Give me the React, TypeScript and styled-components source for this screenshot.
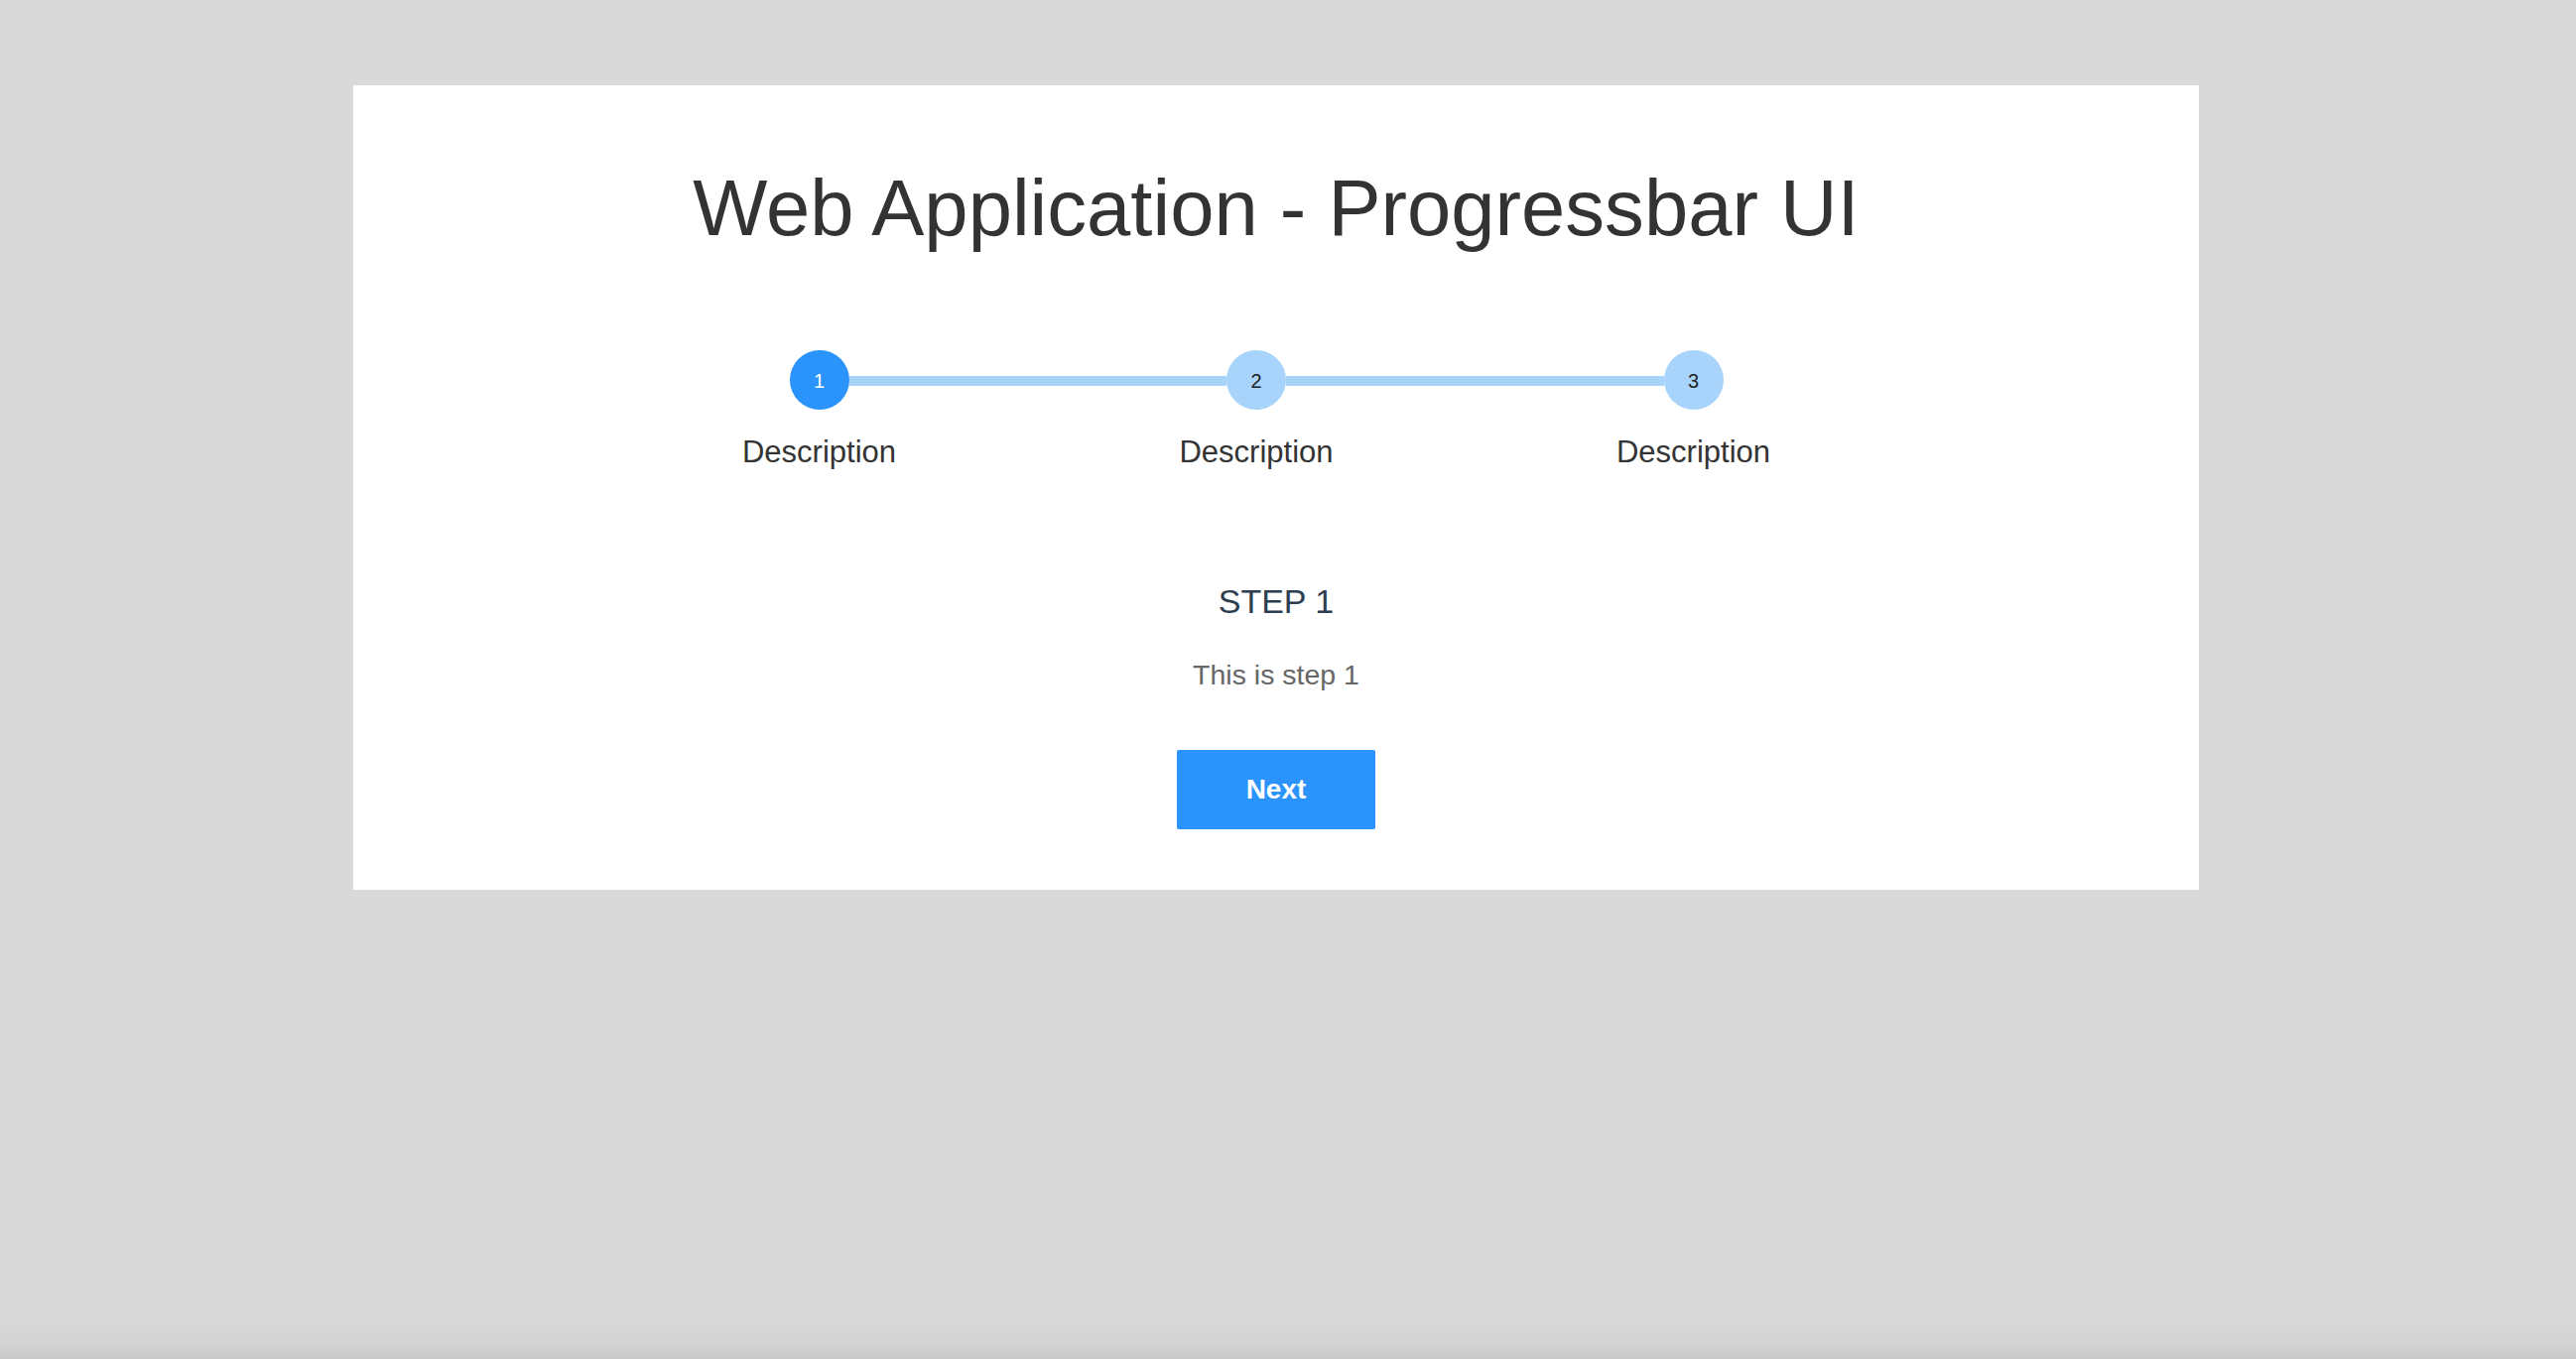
import React from "react";
import styled, { createGlobalStyle } from "styled-components";

const GlobalStyle = createGlobalStyle`
  html, body {
    margin: 0;
    padding: 0;
  }
  body {
    min-height: 100vh;
    font-family: "Liberation Sans", Arial, Helvetica, sans-serif;
    background: linear-gradient(to bottom, #d9d9d9 0, #d9d9d9 calc(100% - 44px), #d3d3d3 calc(100% - 14px), #c9c9c9 100%);
  }
`;

const Page = styled.div`
  display: flex;
  padding: 86px 380px 0 356px;
`;

const Card = styled.main`
  flex: 1;
  background: #ffffff;
  display: flex;
  flex-direction: column;
  align-items: center;
  padding: 79px 0 61px;
`;

const Title = styled.h1`
  margin: 0;
  font-size: 79.6px;
  font-weight: 400;
  line-height: 89px;
  color: #333333;
`;

const Stepper = styled.ol`
  list-style: none;
  display: flex;
  justify-content: center;
  margin: 99px 0 0;
  padding: 0 40px 0 0;
`;

const StepItem = styled.li`
  width: 440.5px;
  display: flex;
  flex-direction: column;
  align-items: center;
`;

const Rail = styled.div`
  width: 100%;
  display: flex;
  align-items: center;
`;

const HalfLine = styled.span<{ $show: boolean }>`
  flex: 1;
  height: 10px;
  margin-top: 2px;
  background: ${(p) => (p.$show ? "#a8d4fb" : "transparent")};
`;

const Dot = styled.span<{ $active: boolean }>`
  width: 60px;
  height: 60px;
  box-sizing: border-box;
  padding-top: 3px;
  border-radius: 50%;
  display: flex;
  align-items: center;
  justify-content: center;
  font-size: 20px;
  background: ${(p) => (p.$active ? "#2a93fc" : "#a8d4fb")};
  color: ${(p) => (p.$active ? "#ffffff" : "#222222")};
`;

const Label = styled.span`
  margin-top: 24px;
  font-size: 31px;
  line-height: 37px;
  color: #333333;
`;

const StepTitle = styled.h3`
  margin: 113px 0 0;
  font-size: 34px;
  font-weight: 400;
  line-height: 39px;
  color: #2c3e50;
`;

const StepText = styled.p`
  margin: 38px 0 0;
  font-size: 28.5px;
  line-height: 32px;
  color: #666666;
`;

const NextButton = styled.button`
  margin-top: 60px;
  width: 200px;
  height: 80px;
  border: none;
  border-radius: 2px;
  background: #2a93fc;
  color: #ffffff;
  font-family: "Liberation Sans", Arial, Helvetica, sans-serif;
  font-size: 28px;
  font-weight: 700;
  cursor: pointer;
`;

const steps = [1, 2, 3];

export default function App() {
  const current = 1;
  return (
    <>
      <GlobalStyle />
      <Page>
        <Card>
          <Title>Web Application - Progressbar UI</Title>
          <Stepper>
            {steps.map((n, i) => (
              <StepItem key={n}>
                <Rail>
                  <HalfLine $show={i > 0} />
                  <Dot $active={n === current}>{n}</Dot>
                  <HalfLine $show={i < steps.length - 1} />
                </Rail>
                <Label>Description</Label>
              </StepItem>
            ))}
          </Stepper>
          <StepTitle>STEP {current}</StepTitle>
          <StepText>This is step {current}</StepText>
          <NextButton>Next</NextButton>
        </Card>
      </Page>
    </>
  );
}
